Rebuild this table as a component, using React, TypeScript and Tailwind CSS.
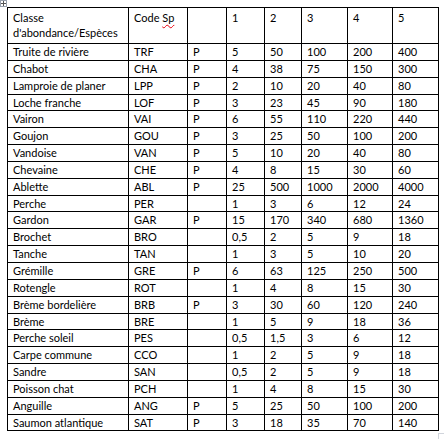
import React from "react";

type Row = [string, string, string, string, string, string, string, string];

const rows: Row[] = [
  ["Truite de rivière", "TRF", "P", "5", "50", "100", "200", "400"],
  ["Chabot", "CHA", "P", "4", "38", "75", "150", "300"],
  ["Lamproie de planer", "LPP", "P", "2", "10", "20", "40", "80"],
  ["Loche franche", "LOF", "P", "3", "23", "45", "90", "180"],
  ["Vairon", "VAI", "P", "6", "55", "110", "220", "440"],
  ["Goujon", "GOU", "P", "3", "25", "50", "100", "200"],
  ["Vandoise", "VAN", "P", "5", "10", "20", "40", "80"],
  ["Chevaine", "CHE", "P", "4", "8", "15", "30", "60"],
  ["Ablette", "ABL", "P", "25", "500", "1000", "2000", "4000"],
  ["Perche", "PER", "", "1", "3", "6", "12", "24"],
  ["Gardon", "GAR", "P", "15", "170", "340", "680", "1360"],
  ["Brochet", "BRO", "", "0,5", "2", "5", "9", "18"],
  ["Tanche", "TAN", "", "1", "3", "5", "10", "20"],
  ["Grémille", "GRE", "P", "6", "63", "125", "250", "500"],
  ["Rotengle", "ROT", "", "1", "4", "8", "15", "30"],
  ["Brème bordelière", "BRB", "P", "3", "30", "60", "120", "240"],
  ["Brème", "BRE", "", "1", "5", "9", "18", "36"],
  ["Perche soleil", "PES", "", "0,5", "1,5", "3", "6", "12"],
  ["Carpe commune", "CCO", "", "1", "2", "5", "9", "18"],
  ["Sandre", "SAN", "", "0,5", "2", "5", "9", "18"],
  ["Poisson chat", "PCH", "", "1", "4", "8", "15", "30"],
  ["Anguille", "ANG", "P", "5", "25", "50", "100", "200"],
  ["Saumon atlantique", "SAT", "P", "3", "18", "35", "70", "140"],
];

const cell = "border-r border-b border-black pl-[5px] overflow-hidden whitespace-nowrap";

function MoveHandle() {
  return (
    <div className="absolute left-0 top-0 w-[7px] h-[7px] border border-gray-400 bg-white flex items-center justify-center">
      <svg width="5" height="5" viewBox="0 0 5 5">
        <path d="M2.5 0V5M0 2.5H5" stroke="#555" strokeWidth="1" />
      </svg>
    </div>
  );
}

export default function App() {
  return (
    <div className="relative w-[444px] h-[439px] bg-white overflow-hidden text-black font-['Lato',sans-serif] text-[11px]">
      <MoveHandle />
      <div className="ml-[7px] mt-[7px] w-[432px] grid grid-cols-[121px_59px_39px_38px_37px_46px_45px_46px] border-l border-t border-black">
        <div className={`${cell} h-[36px] whitespace-normal leading-[15px] pt-[2px]`}>
          Classe
          <br />
          d'abondance/Espèces
        </div>
        <div className={`${cell} h-[36px] leading-[15px] pt-[2px]`}>
          Code{" "}
          <span className="underline decoration-wavy decoration-red-600 decoration-1 underline-offset-2">
            Sp
          </span>
        </div>
        <div className={`${cell} h-[36px]`} />
        {["1", "2", "3", "4", "5"].map((n) => (
          <div key={n} className={`${cell} h-[36px] leading-[15px] pt-[2px]`}>
            {n}
          </div>
        ))}
        {rows.map((r) =>
          r.map((v, i) => (
            <div key={r[0] + i} className={`${cell} h-[16.85px] leading-[15px]`}>
              {v}
            </div>
          ))
        )}
      </div>
      <div className="absolute left-[438px] top-[433px] w-[8px] h-[8px] border-l border-t border-gray-300" />
    </div>
  );
}
